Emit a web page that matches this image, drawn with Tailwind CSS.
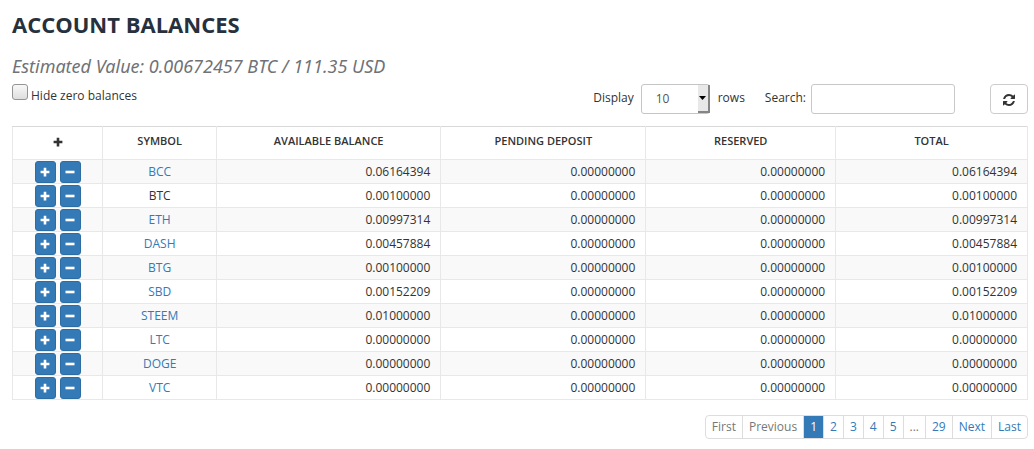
<!DOCTYPE html>
<html lang="en">
<head>
<meta charset="utf-8">
<meta name="viewport" content="width=device-width, initial-scale=1">
<title>Account Balances</title>
<script src="https://cdn.jsdelivr.net/npm/@tailwindcss/browser@4"></script>
</head>
<body class="bg-white px-3 pt-2 pr-[6px] font-['Open_Sans',sans-serif] text-xs text-[#333]">
<svg class="hidden" aria-hidden="true">
  <symbol id="plus" viewBox="0 0 10 10"><path d="M3.700 .8h2.600v2.900H9.400v2.600H6.300v3.100H3.700V6.300H.6V3.700h3.100z" fill="currentColor"/></symbol>
  <symbol id="minus" viewBox="0 0 10 10"><path d="M.5 3.700h9v2.600H.5z" fill="currentColor"/></symbol>
  <symbol id="refresh" viewBox="0 0 1536 1536"><path fill="currentColor" d="M1511 928q0 5-1 7-64 268-268 434.500T764 1536q-146 0-282.500-55T238 1324l-129 129q-19 19-45 19t-45-19-19-45V960q0-26 19-45t45-19h448q26 0 45 19t19 45-19 45l-137 137q71 66 161 102t187 36q134 0 250-65t186-179q11-17 53-117 8-23 30-23h192q13 0 22.500 9.500t9.500 22.500zm25-800v448q0 26-19 45t-45 19h-448q-26 0-45-19t-19-45 19-45l138-138Q969 256 768 256q-134 0-250 65T332 500q-11 17-53 117-8 23-30 23H50q-13 0-22.500-9.500T18 608v-7q65-268 270-434.500T768 0q146 0 284 55.500T1297 212l130-129q19-19 45-19t45 19 19 45z"/></symbol>
</svg>
<main>
  <h1 class="text-[22px] leading-8 font-bold text-[#27303d]">ACCOUNT BALANCES</h1>
  <p class="mt-4 font-['Noto_Sans','Open_Sans',sans-serif] text-lg leading-5 text-[#6f7277] italic">Estimated Value: 0.00672457 BTC / 111.35 USD</p>

  <div class="mt-2 flex items-start justify-between">
    <label class="flex gap-[3px] leading-6">
      <input type="checkbox" class="size-4 appearance-none rounded-[3px] border border-[#949494] bg-linear-to-b from-[#f8f8f8] to-[#dedede]">
      Hide zero balances
    </label>
    <div class="flex items-start leading-7">
      <label for="rows">Display</label>
      <div class="relative ml-[7px]">
        <select id="rows" class="block h-[30px] w-[69px] appearance-none rounded-[3px] border border-[#c5c5c5] bg-white pl-3.5 text-xs text-[#555]"><option>10</option><option>25</option><option>50</option></select>
        <span class="pointer-events-none absolute top-px right-0 bottom-px flex w-3 items-center justify-center border-r-2 border-b-2 border-[#858585] bg-[#e8e8e8]">
          <svg class="h-1 w-[7px]" viewBox="0 0 7 4"><path d="M0 0h7L3.500 4z" fill="#000"/></svg>
        </span>
      </div>
      <label for="rows" class="ml-2">rows</label>
      <label for="search" class="ml-5">Search:</label>
      <input id="search" type="text" class="ml-[5px] h-[30px] w-36 rounded-[3px] border border-[#c8c8c8] px-2">
      <button type="button" aria-label="Refresh" class="ml-[35px] flex h-[30px] w-[38px] items-center justify-center rounded-[4px] border border-[#ccc]"><svg class="mt-0.5 size-3"><use href="#refresh"/></svg></button>
    </div>
  </div>

  <table class="mt-3 w-full table-fixed border-collapse border border-[#e2e2e2]">
    <thead>
      <tr class="h-[33px] text-[11px] font-semibold [&>th]:border [&>th]:border-[#e8e8e8] [&>th]:border-t-[#d9d9d9] [&>th]:pb-[3px] [&>th]:font-semibold">
        <th class="w-[8.9%]" aria-label="Actions"><svg class="mx-auto size-[10px]"><use href="#plus"/></svg></th>
        <th class="w-[11.2%]">SYMBOL</th>
        <th class="w-[22.1%]">AVAILABLE BALANCE</th>
        <th class="w-[20.2%]">PENDING DEPOSIT</th>
        <th class="w-[18.7%]">RESERVED</th>
        <th class="w-[18.9%]">TOTAL</th>
      </tr>
    </thead>
    <tbody id="balances"></tbody>
  </table>

  <nav aria-label="Pages" class="mt-[15px] flex justify-end">
    <ul class="flex divide-x divide-[#ddd] overflow-hidden rounded-[4px] border border-[#ddd] leading-[22px] text-[#337ab7]">
      <li class="px-1.5 text-[#777]">First</li>
      <li class="px-1.5 text-[#777]">Previous</li>
      <li><a href="#1" aria-current="page" class="block bg-[#337ab7] px-1.5 text-white">1</a></li>
      <li><a href="#2" class="block px-1.5">2</a></li>
      <li><a href="#3" class="block px-1.5">3</a></li>
      <li><a href="#4" class="block px-1.5">4</a></li>
      <li><a href="#5" class="block px-1.5">5</a></li>
      <li class="px-1.5 text-[#777]">...</li>
      <li><a href="#29" class="block px-1.5">29</a></li>
      <li><a href="#next" class="block px-1.5">Next</a></li>
      <li><a href="#last" class="block px-1.5">Last</a></li>
    </ul>
  </nav>
</main>
<script>
const balances = [
  ['BCC', '0.06164394'], ['BTC', '0.00100000'], ['ETH', '0.00997314'], ['DASH', '0.00457884'], ['BTG', '0.00100000'],
  ['SBD', '0.00152209'], ['STEEM', '0.01000000'], ['LTC', '0.00000000'], ['DOGE', '0.00000000'], ['VTC', '0.00000000'],
];
const zero = '0.00000000';
const button = (label, icon) => `<button type="button" aria-label="${label}" class="flex h-[22px] w-[21px] items-center justify-center rounded-[3px] border border-[#2e6da4] bg-[#337ab7] text-white"><svg class="size-[10px] shrink-0"><use href="#${icon}"/></svg></button>`;
const number = value => `<td class="border border-[#e8e8e8] pr-2.5 text-right">${value}</td>`;
document.getElementById('balances').innerHTML = balances.map(([symbol, total]) => `
  <tr class="h-6 odd:bg-[#f9f9f9]">
    <td class="border border-[#e8e8e8] p-0"><div class="flex justify-center gap-1">${button('Deposit ' + symbol, 'plus')}${button('Withdraw ' + symbol, 'minus')}</div></td>
    <td class="border border-[#e8e8e8] p-0 text-center">${symbol === 'BTC' ? symbol : `<a href="#${symbol}" class="text-[#337ab7]">${symbol}</a>`}</td>
    ${number(total)}${number(zero)}${number(zero)}${number(total)}
  </tr>`).join('');
</script>
</body>
</html>
